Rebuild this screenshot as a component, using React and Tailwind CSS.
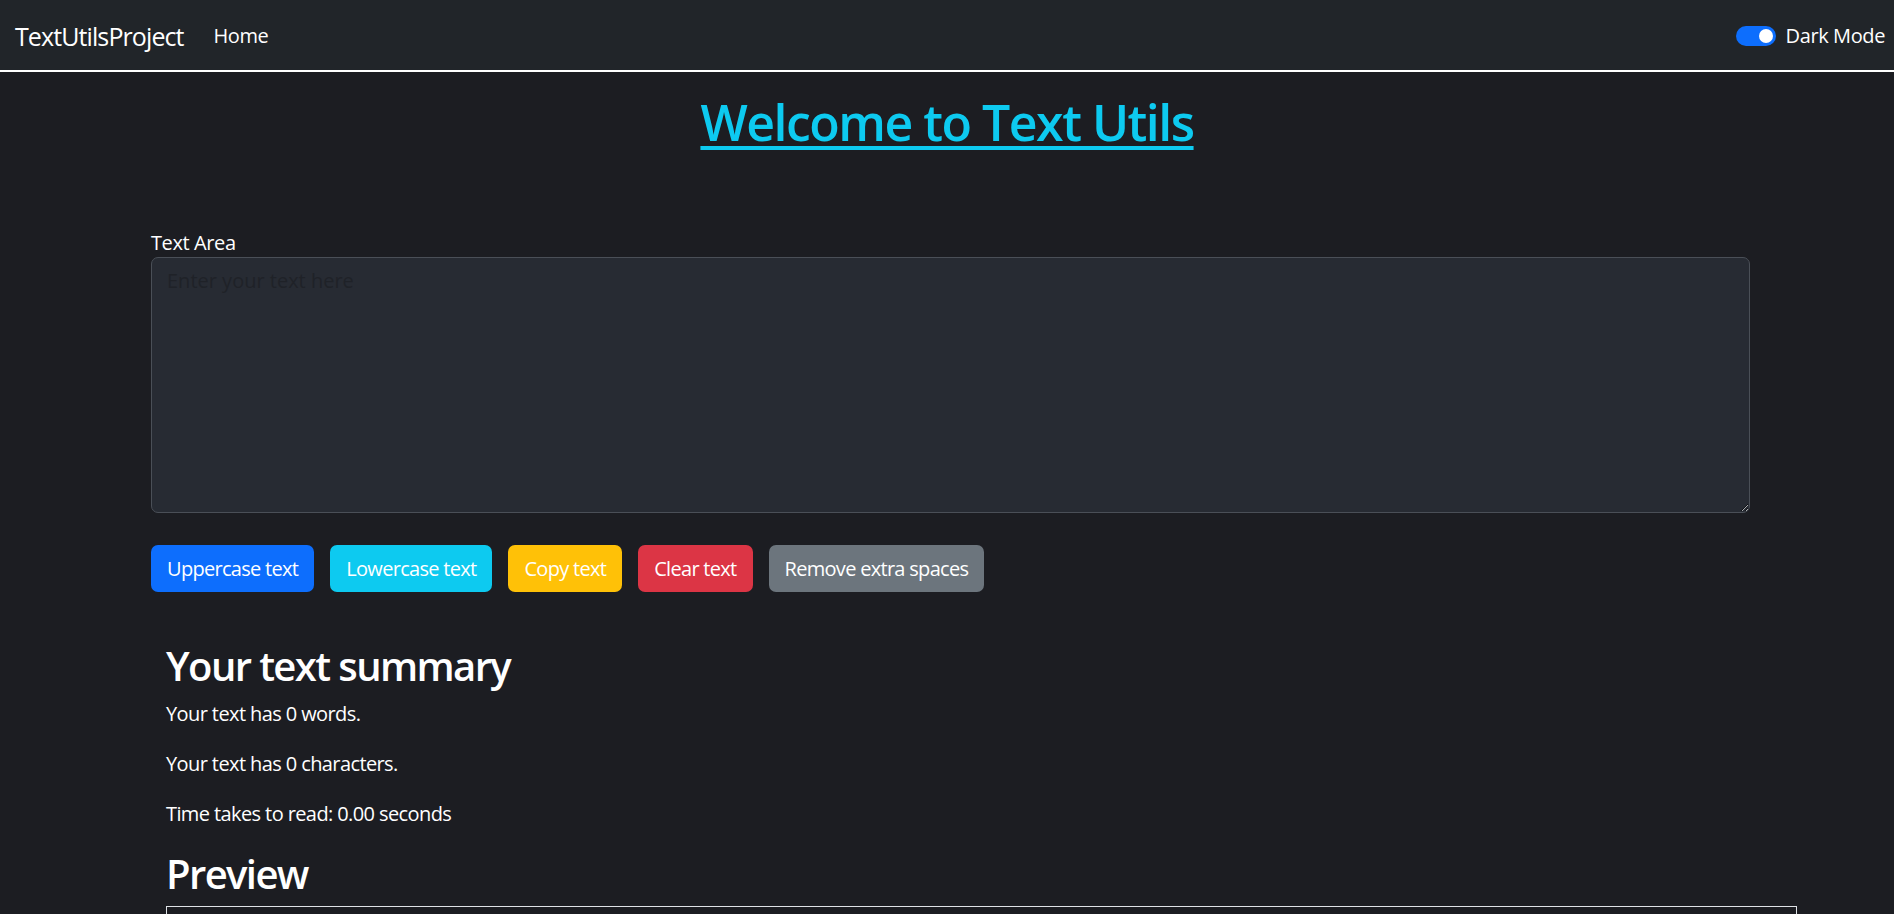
import React, { useState } from 'react';

const font = { fontFamily: '"Open Sans", "Noto Sans", sans-serif' };

const Btn = ({ children, className }) => (
  <button
    className={`h-[47px] px-[15px] rounded-[7px] text-[20px] leading-[30px] tracking-[-0.7px] text-white border border-transparent ${className}`}
  >
    {children}
  </button>
);

export default function App() {
  const [text, setText] = useState('');
  const words = text.split(/\s+/).filter((w) => w.length > 0).length;

  return (
    <div className="h-[914px] overflow-hidden bg-[#1c1d22] text-white" style={font}>
      {/* navbar */}
      <nav className="h-[72px] bg-[#212529] border-b-2 border-white flex items-center pl-[15px] pr-[9px] pt-[2px]">
        <span className="text-[25px] tracking-[-0.9px] leading-[36px]">TextUtilsProject</span>
        <a className="ml-[30px] text-[20px] tracking-[-0.5px]">Home</a>
        <div className="ml-auto flex items-center gap-[10px]">
          <div className="w-[40px] h-[20px] rounded-full bg-[#0d6efd] flex items-center justify-end pr-[3px]">
            <div className="w-[14px] h-[14px] rounded-full bg-white" />
          </div>
          <span className="text-[20px] tracking-[-0.4px]">Dark Mode</span>
        </div>
      </nav>

      {/* heading */}
      <h1 className="text-center mt-[20px] text-[50px] leading-[60px] font-semibold tracking-[-1.5px] text-[#0dcaf0] underline decoration-[4px] underline-offset-[5px]">
        Welcome to Text Utils
      </h1>

      {/* text area */}
      <div className="ml-[151px] w-[1599px] mt-[77px]">
        <label className="block text-[20px] leading-[28px] tracking-[-0.4px]">Text Area</label>
        <textarea
          value={text}
          onChange={(e) => setText(e.target.value)}
          placeholder="Enter your text here"
          className="block w-full h-[256px] bg-[#272b33] border border-[#4a4f57] rounded-[7px] px-[15px] py-[8px] text-[20px] text-white placeholder:text-[#1f2228] outline-none resize-y"
        />
        <div className="flex gap-[16px] mt-[32px]">
          <Btn className="bg-[#0d6efd]">Uppercase text</Btn>
          <Btn className="bg-[#0dcaf0]">Lowercase text</Btn>
          <Btn className="bg-[#ffc107]">Copy text</Btn>
          <Btn className="bg-[#dc3545]">Clear text</Btn>
          <Btn className="bg-[#6c757d]">Remove extra spaces</Btn>
        </div>
      </div>

      {/* summary */}
      <div className="ml-[166px] w-[1631px] mt-[50px]">
        <h2 className="text-[40px] leading-[48px] font-semibold tracking-[-1.6px]">Your text summary</h2>
        <p className="mt-[9px] text-[20px] leading-[30px] tracking-[-0.6px]">Your text has {words} words.</p>
        <p className="mt-[20px] text-[20px] leading-[30px] tracking-[-0.6px]">Your text has {text.length} characters.</p>
        <p className="mt-[20px] text-[20px] leading-[30px] tracking-[-0.6px]">Time takes to read: {(0.008 * words * 60).toFixed(2)} seconds</p>
        <h2 className="mt-[21px] text-[40px] leading-[48px] font-semibold tracking-[-1.6px]">Preview</h2>
        <div className="mt-[8px] h-[120px] border border-[#dee2e6]" />
      </div>
    </div>
  );
}
